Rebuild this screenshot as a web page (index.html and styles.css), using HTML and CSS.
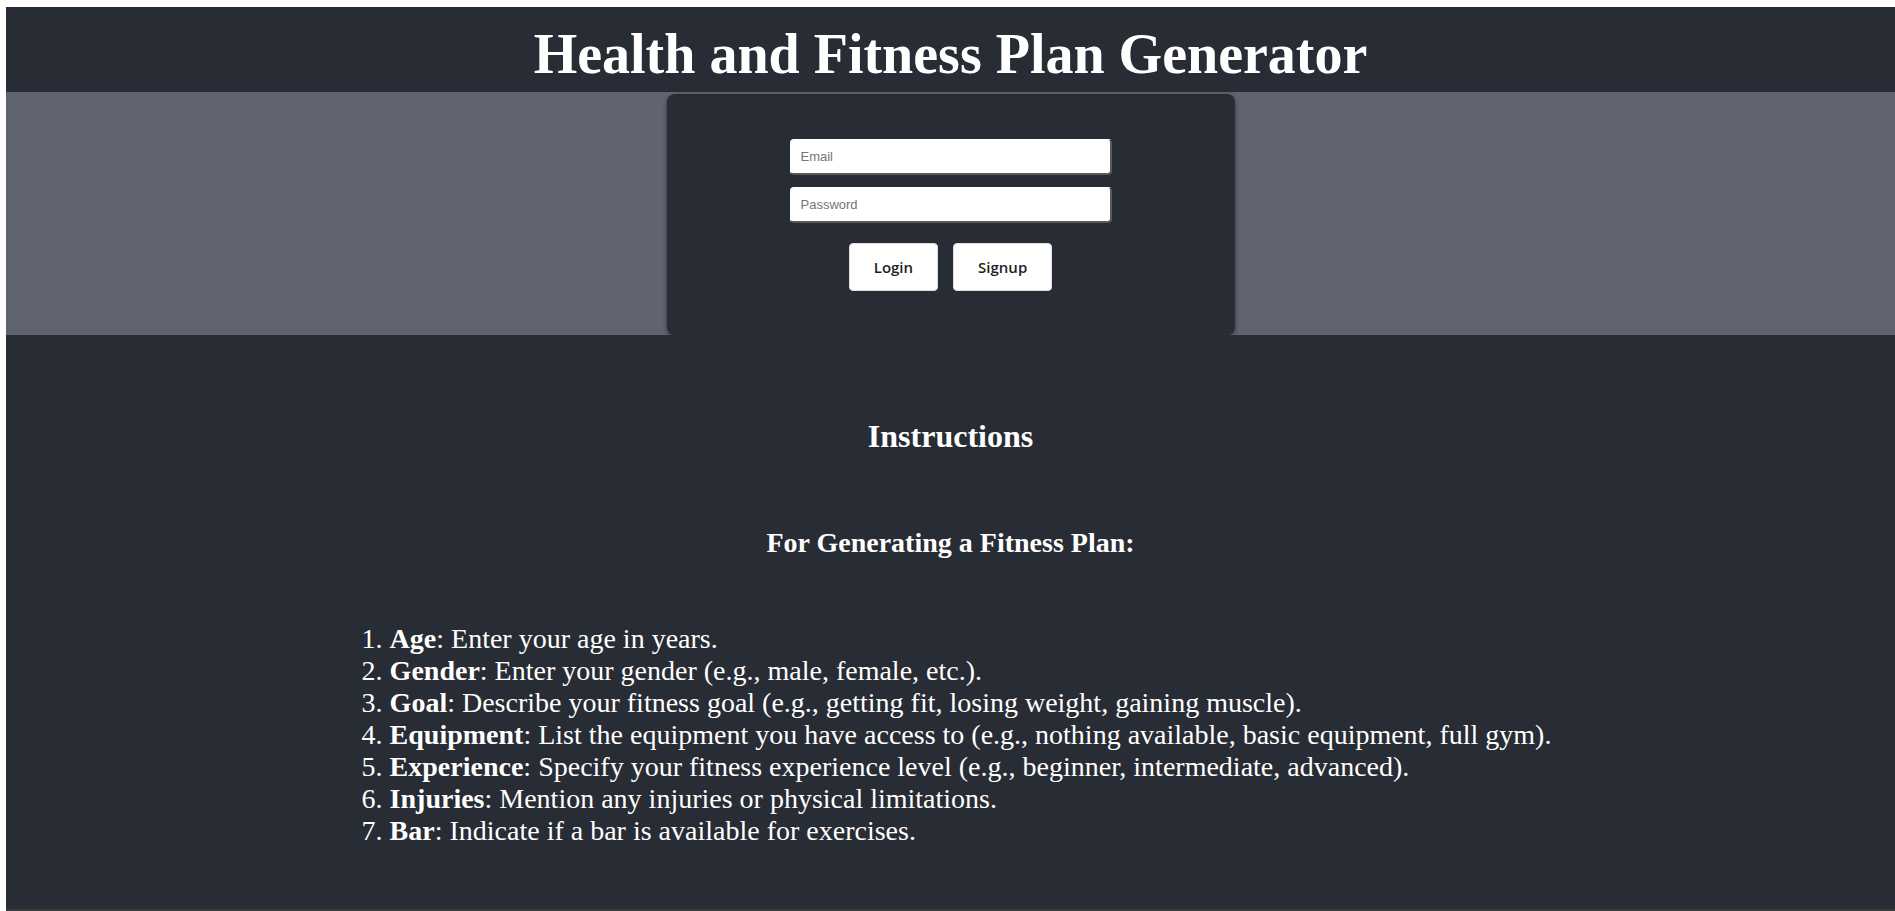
FILE: index.html
```html
<!DOCTYPE html>
<html lang="en">
<head>
<meta charset="utf-8">
<title>Health and Fitness Plan Generator</title>
<link rel="stylesheet" href="styles.css">
</head>
<body>
<div class="app">
  <header class="app-header">
    <h1 class="title">Health and Fitness Plan Generator</h1>
  </header>
  <section class="auth-band">
    <div class="auth-card">
      <input class="field" type="email" placeholder="Email">
      <input class="field" type="password" placeholder="Password">
      <div class="actions">
        <button class="btn">Login</button>
        <button class="btn">Signup</button>
      </div>
    </div>
  </section>
  <main class="instructions">
    <h2 class="ins-title">Instructions</h2>
    <h3 class="ins-sub">For Generating a Fitness Plan:</h3>
    <div class="list-wrap">
      <ol class="steps">
        <li><b>Age</b>: Enter your age in years.</li>
        <li><b>Gender</b>: Enter your gender (e.g., male, female, etc.).</li>
        <li><b>Goal</b>: Describe your fitness goal (e.g., getting fit, losing weight, gaining muscle).</li>
        <li><b>Equipment</b>: List the equipment you have access to (e.g., nothing available, basic equipment, full gym).</li>
        <li><b>Experience</b>: Specify your fitness experience level (e.g., beginner, intermediate, advanced).</li>
        <li><b>Injuries</b>: Mention any injuries or physical limitations.</li>
        <li><b>Bar</b>: Indicate if a bar is available for exercises.</li>
      </ol>
    </div>
  </main>
</div>
</body>
</html>
```
FILE: styles.css
```css
html, body {
  background: #ffffff;
}
body {
  margin: 7px 0 0 6px;
  font-family: "Liberation Serif", "Times New Roman", serif;
  overflow: hidden;
}
.app {
  display: flex;
  flex-direction: column;
  height: 904px;
}
.app-header {
  background: #282c34;
  padding: 16px 0 7px;
  text-align: center;
}
.title {
  margin: 0;
  color: #ffffff;
  font-size: 56px;
  line-height: 62px;
  font-weight: bold;
}
.auth-band {
  background: #5f6470;
  display: flex;
  justify-content: center;
  padding-top: 2px;
}
.auth-card {
  width: 568px;
  height: 241px;
  box-sizing: border-box;
  background: #282c34;
  border-radius: 8px;
  box-shadow: 0 2px 5px rgba(0, 0, 0, 0.45);
  padding-top: 45px;
  display: flex;
  flex-direction: column;
  align-items: center;
}
.field {
  width: 322px;
  height: 36px;
  box-sizing: border-box;
  margin: 0 0 12px;
  padding: 0 10px;
  background: #ffffff;
  border: 1px solid #ffffff;
  border-right: 2px solid #5a5a5a;
  border-bottom: 2px solid #5a5a5a;
  border-radius: 4px;
  font-family: "Liberation Sans", Arial, sans-serif;
  font-size: 13px;
  color: #222;
  outline: none;
}
.field::placeholder {
  color: #757575;
}
.actions {
  display: flex;
  gap: 15px;
  margin-top: 8px;
}
.btn {
  height: 48px;
  padding: 0 24px;
  background: #ffffff;
  border: 1px solid #dddddd;
  border-radius: 4px;
  font-family: "Open Sans", "Segoe UI", sans-serif;
  font-weight: 600;
  font-size: 15px;
  color: #1e1e1e;
}
.instructions {
  flex: 1;
  background: #282c34;
  color: #ffffff;
  text-align: center;
  padding-top: 83px;
  border-bottom: 2px solid #3a3a3a;
}
.ins-title {
  margin: 0;
  font-size: 32px;
  line-height: 37px;
}
.ins-sub {
  margin: 72px 0 0;
  font-size: 28px;
  line-height: 32px;
}
.list-wrap {
  display: flex;
  justify-content: center;
  margin-top: 64px;
  padding-left: 12px;
}
.steps {
  margin: 0;
  padding: 0;
  list-style: decimal inside;
  text-align: left;
  font-size: 28px;
  line-height: 32px;
}
.steps li::marker {
  content: counter(list-item) ". ";
}
```
